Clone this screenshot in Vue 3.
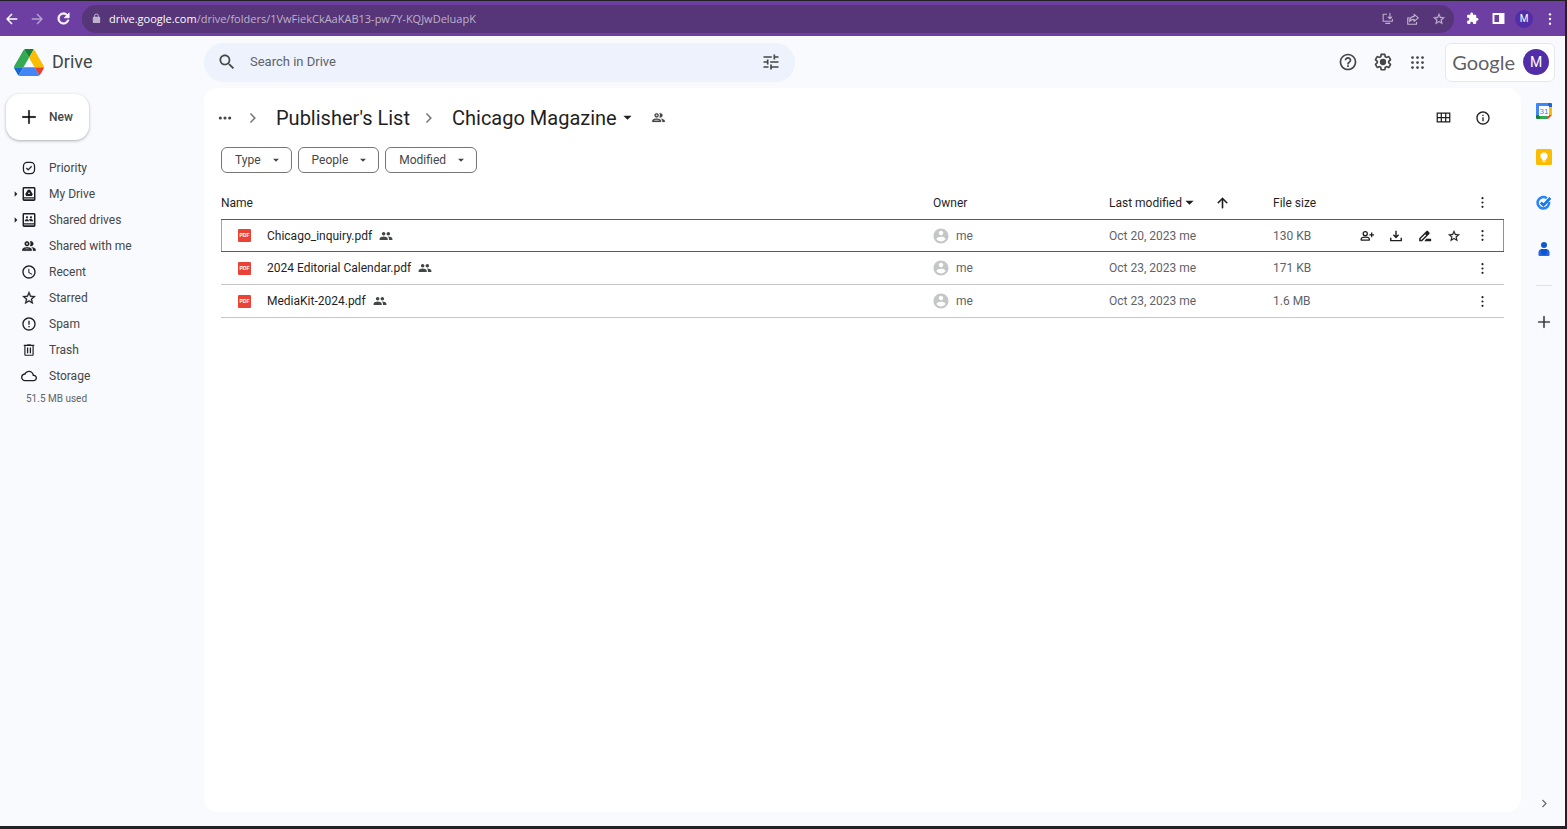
<script setup>
import { ref, h } from 'vue'

const ring = '<path d="M12 2C6.480 2 2 6.480 2 12s4.480 10 10 10 10-4.480 10-10S17.520 2 12 2zm0 18c-4.410 0-8-3.590-8-8s3.590-8 8-8 8 3.590 8 8-3.590 8-8 8z"/>'
const stroke = (body, w = 2) => `<g fill="none" stroke="currentColor" stroke-width="${w}" stroke-linejoin="round" stroke-linecap="butt">${body}</g>`

const icons = {
  back: stroke('<path d="M21 12H5M12 3.500L3.500 12l8.500 8.500"/>', 2.6),
  forward: stroke('<path d="M3 12h16M12 3.500l8.500 8.500-8.500 8.500"/>', 2.4),
  reload: '<path d="M17.650 6.350C16.200 4.900 14.210 4 12 4c-4.420 0-7.990 3.580-7.990 8s3.570 8 7.990 8c3.730 0 6.840-2.550 7.730-6h-2.080c-.820 2.330-3.040 4-5.650 4-3.310 0-6-2.690-6-6s2.690-6 6-6c1.660 0 3.140.690 4.220 1.780L13 11h7V4l-2.350 2.350z" stroke="currentColor" stroke-width="1"/>',
  lock: '<path d="M18 8h-1V6c0-2.760-2.240-5-5-5S7 3.240 7 6v2H6c-1.100 0-2 .9-2 2v10c0 1.100.9 2 2 2h12c1.100 0 2-.9 2-2V10c0-1.100-.9-2-2-2zM9 6c0-1.660 1.340-3 3-3s3 1.340 3 3v2H9V6z"/>',
  install: stroke('<path d="M11 4H4v13h17v-4M8 21h9M16.500 2v10M12.500 8.500l4 4 4-4"/>'),
  send: stroke('<path d="M6 10H3v11h15v-4M14 4l7 6-7 6v-3.500c-4 0-6 1-8 3.500.5-5 3-8 8-8.500z"/>'),
  star: '<path d="M22 9.240l-7.190-.620L12 2 9.190 8.630 2 9.240l5.460 4.730L5.820 21 12 17.270 18.180 21l-1.630-7.030L22 9.240zM12 15.400l-3.760 2.270 1-4.280-3.320-2.880 4.380-.380L12 6.100l1.710 4.040 4.380.380-3.320 2.880 1 4.280L12 15.400z" stroke="currentColor" stroke-width=".4"/>',
  puzzle: '<path d="M20.500 11H19V7c0-1.100-.9-2-2-2h-4V3.500C13 2.120 11.880 1 10.500 1S8 2.120 8 3.500V5H4c-1.100 0-1.990.9-1.990 2v3.800H3.500c1.490 0 2.700 1.210 2.700 2.700s-1.210 2.700-2.700 2.700H2V20c0 1.100.9 2 2 2h3.800v-1.500c0-1.490 1.210-2.700 2.700-2.700s2.700 1.210 2.700 2.700V22H17c1.100 0 2-.9 2-2v-4h1.500c1.380 0 2.500-1.120 2.500-2.500S21.880 11 20.500 11z"/>',
  panel: '<path fill-rule="evenodd" d="M1 2h22v20H1zM4.500 5.500v13H13v-13z"/>',
  dotsV: '<circle cx="12" cy="4" r="2"/><circle cx="12" cy="12" r="2"/><circle cx="12" cy="20" r="2"/>',
  dotsH: '<circle cx="4" cy="12" r="2.700"/><circle cx="12" cy="12" r="2.700"/><circle cx="20" cy="12" r="2.700"/>',
  search: '<path d="M15.500 14h-.790l-.280-.270C15.410 12.590 16 11.110 16 9.500 16 5.910 13.090 3 9.500 3S3 5.910 3 9.500 5.910 16 9.500 16c1.610 0 3.090-.590 4.230-1.570l.270.280v.790l5 4.990L20.490 19l-4.990-5zm-6 0C7.010 14 5 11.990 5 9.500S7.010 5 9.500 5 14 7.010 14 9.500 11.990 14 9.500 14z"/>',
  tune: '<path d="M3 17v2h6v-2H3zM3 5v2h10V5H3zm10 16v-2h8v-2h-8v-2h-2v6h2zM7 9v2H3v2h4v2h2V9H7zm14 4v-2H11v2h10zm-6-4h2V7h4V5h-4V3h-2v6z"/>',
  help: ring + '<path d="M11 16h2v2h-2zM12 6c-2.210 0-4 1.790-4 4h2c0-1.100.9-2 2-2s2 .9 2 2c0 2-3 1.750-3 5h2c0-2.250 3-2.500 3-5 0-2.210-1.790-4-4-4z"/>',
  gear: '<path d="M13.850 22.250h-3.700c-.740 0-1.360-.540-1.450-1.270l-.270-1.890c-.270-.140-.530-.290-.790-.460l-1.800.720c-.7.260-1.470-.030-1.810-.650L2.200 15.530c-.350-.660-.2-1.440.360-1.880l1.530-1.190c-.010-.150-.020-.3-.020-.460 0-.150.010-.310.020-.460l-1.520-1.190c-.590-.450-.740-1.260-.370-1.880l1.850-3.190c.340-.620 1.110-.9 1.790-.630l1.810.730c.260-.170.520-.320.780-.460l.270-1.910c.090-.7.710-1.250 1.440-1.250h3.700c.740 0 1.360.540 1.450 1.270l.270 1.890c.270.140.530.290.790.460l1.800-.720c.710-.260 1.480.030 1.820.650l1.840 3.180c.360.660.2 1.440-.360 1.880l-1.520 1.190c.010.150.020.3.020.460s-.010.310-.020.460l1.520 1.190c.560.450.720 1.230.370 1.860l-1.860 3.220c-.340.620-1.110.9-1.800.630l-1.800-.720c-.260.170-.520.320-.780.460l-.270 1.910c-.1.680-.720 1.220-1.460 1.220zm-3.230-2h2.760l.370-2.550.530-.220c.440-.180.880-.440 1.340-.780l.450-.340 2.380.960 1.380-2.400-2.030-1.580.070-.560c.030-.260.060-.510.060-.780s-.030-.530-.060-.780l-.070-.560 2.030-1.580-1.390-2.400-2.390.960-.450-.350c-.420-.320-.870-.580-1.330-.770l-.520-.220-.370-2.550h-2.760l-.370 2.550-.530.210c-.440.190-.880.440-1.340.790l-.450.330-2.380-.950-1.390 2.390 2.030 1.580-.070.560a7 7 0 0 0-.060.790c0 .260.020.530.060.780l.070.560-2.030 1.580 1.380 2.400 2.390-.960.450.350c.430.330.860.580 1.330.770l.530.220z"/><circle cx="12" cy="12" r="3.800"/>',
  apps: [4, 12, 20].flatMap(y => [4, 12, 20].map(x => `<circle cx="${x}" cy="${y}" r="2.200"/>`)).join(''),
  plus: '<path d="M11 2h2v9h9v2h-9v9h-2v-9H2v-2h9z" stroke="currentColor" stroke-width=".4"/>',
  priority: stroke('<rect x="2.500" y="2.500" width="19" height="19" rx="6.500"/><path d="M7.500 12l3.200 3.200 5.800-6.200"/>', 2.2),
  drive: '<path fill-rule="evenodd" d="M4.500 1.500h15a2.200 2.200 0 0 1 2.200 2.200v16.600a2.200 2.200 0 0 1-2.200 2.200h-15a2.200 2.200 0 0 1-2.200-2.200V3.700a2.200 2.200 0 0 1 2.200-2.200zM4.500 3.700v13h15v-13zM4.500 18.700v1.300h15v-1.300z"/><path fill-rule="evenodd" d="M10.300 5.500h3.400l4 6.700-1.500 2.800H7.800l-1.500-2.800zM12 9l-1.500 3h3z"/>',
  shared: '<path fill-rule="evenodd" d="M4.500 1.500h15a2.200 2.200 0 0 1 2.200 2.200v16.600a2.200 2.200 0 0 1-2.200 2.200h-15a2.200 2.200 0 0 1-2.200-2.200V3.700a2.200 2.200 0 0 1 2.200-2.200zM4.500 3.700v13h15v-13zM4.500 18.700v1.300h15v-1.300z"/><circle cx="9" cy="8" r="1.700"/><circle cx="15" cy="8" r="1.700"/><path d="M5.500 14c0-2.500 1.500-3.300 3.300-3.300s3.200.8 3.200 3.300zM13 14c0-1.500-.3-2.300-.9-3 .8-.5 5.900-1 6.400 3z"/>',
  people: '<path d="M9 13.750c-2.340 0-7 1.170-7 3.500V19h14v-1.750c0-2.330-4.660-3.500-7-3.500zM4.340 17c.840-.580 2.870-1.250 4.660-1.250s3.820.670 4.660 1.250H4.340zM9 12c1.930 0 3.500-1.570 3.500-3.500S10.930 5 9 5 5.500 6.570 5.500 8.500 7.070 12 9 12zm0-5c.830 0 1.500.670 1.500 1.500S9.830 10 9 10s-1.500-.670-1.500-1.500S8.170 7 9 7zm7.040 6.810c1.160.840 1.960 1.960 1.960 3.440V19h4v-1.750c0-2.020-3.500-3.170-5.960-3.440zM15 12c1.930 0 3.500-1.570 3.500-3.500S16.930 5 15 5c-.540 0-1.040.130-1.500.350.630.890 1 1.980 1 3.150s-.370 2.260-1 3.150c.460.220.960.350 1.500.350z" stroke="currentColor" stroke-width=".4"/>',
  clock: ring + '<path d="M12.500 7H11v6l5.250 3.150.750-1.230-4.500-2.670z"/>',
  spam: ring + '<path d="M11 15h2v2h-2zM11 7h2v6h-2z"/>',
  trash: '<path fill-rule="evenodd" d="M15 3V2H9v1H3v2h1v15c0 1.100.9 2 2 2h12c1.100 0 2-.9 2-2V5h1V3h-6zm3 17H6V5h12v15zM8.500 7.500h2.200v10H8.500zM13.300 7.500h2.200v10h-2.200z"/>',
  cloud: '<path d="M19.350 10.040C18.670 6.590 15.640 4 12 4 9.110 4 6.600 5.640 5.350 8.040 2.340 8.360 0 10.910 0 14c0 3.310 2.690 6 6 6h13c2.760 0 5-2.240 5-5 0-2.640-2.050-4.780-4.650-4.960zM19 18H6c-2.210 0-4-1.790-4-4s1.790-4 4-4h.710C7.370 7.690 9.480 6 12 6c3.040 0 5.500 2.460 5.500 5.500v.5H19c1.660 0 3 1.340 3 3s-1.340 3-3 3z"/>',
  group: '<path d="M16 11c1.660 0 2.990-1.340 2.990-3S17.660 5 16 5s-3 1.340-3 3 1.340 3 3 3zm-8 0c1.660 0 2.990-1.340 2.990-3S9.660 5 8 5 5 6.340 5 8s1.340 3 3 3zm0 2c-2.330 0-7 1.170-7 3.500V19h14v-2.500c0-2.330-4.670-3.500-7-3.500zm8 0c-.290 0-.620.020-.970.050 1.160.840 1.970 1.970 1.970 3.450V19h6v-2.500c0-2.330-4.670-3.500-7-3.500z"/>',
  chevron: '<path d="M8.500 3.500L6.700 5.300l6.700 6.700-6.700 6.700 1.800 1.800L17 12z"/>',
  caret: '<path d="M3 8l9 9 9-9z"/>',
  caretRight: '<path d="M8 4l8 8-8 8z"/>',
  grid: '<path fill-rule="evenodd" d="M1 4h22v16H1zM3 6v5h4.500V6zM9.500 6v5h5V6zM16.500 6v5H21V6zM3 13v5h4.500v-5zM9.500 13v5h5v-5zM16.500 13v5H21v-5z"/>',
  info: ring + '<path d="M11 7h2v2h-2zM11 11h2v6h-2z"/>',
  up: '<path d="M4 12l1.410 1.410L11 7.830V21h2V7.830l5.580 5.590L20 12l-8-8z" stroke="currentColor" stroke-width=".5"/>',
  account: '<path d="M12 2C6.480 2 2 6.480 2 12s4.480 10 10 10 10-4.480 10-10S17.520 2 12 2zm0 3c1.660 0 3 1.340 3 3s-1.340 3-3 3-3-1.340-3-3 1.340-3 3-3zm0 14.200c-2.500 0-4.710-1.280-6-3.220.030-1.990 4-3.080 6-3.080 1.990 0 5.970 1.090 6 3.080-1.290 1.940-3.500 3.220-6 3.220z"/>',
  addPerson: stroke('<circle cx="9" cy="8" r="3.500"/><path d="M2 19v-1.500c0-2.500 4-3.500 7-3.500s7 1 7 3.500V19zM20 6v8M16 10h8"/>', 2.2),
  download: stroke('<path d="M12 3v11M7.500 10l4.500 4.500 4.500-4.500M3 15v5h18v-5"/>', 2.4),
  rename: '<path fill-rule="evenodd" d="M2 21v-5L14.500 3.500c.8-.8 1.800-.8 2.600 0l2.400 2.400c.8.8.8 1.800 0 2.600L7 21zM4.500 18.500h1.600L14 10.600 12.400 9 4.500 16.900z"/><path d="M14 16.500h8.500V21H11z"/>',
}

const Icon = props => h('svg', { class: 'icon', viewBox: '0 0 24 24', 'aria-hidden': 'true', innerHTML: icons[props.name] })
Icon.props = ['name']

const nav = [
  { label: 'Priority', icon: 'priority' },
  { label: 'My Drive', icon: 'drive', expandable: true },
  { label: 'Shared drives', icon: 'shared', expandable: true },
  { label: 'Shared with me', icon: 'people' },
  { label: 'Recent', icon: 'clock' },
  { label: 'Starred', icon: 'star' },
  { label: 'Spam', icon: 'spam' },
  { label: 'Trash', icon: 'trash' },
  { label: 'Storage', icon: 'cloud' },
]
const filters = ['Type', 'People', 'Modified']
const files = [
  { name: 'Chicago_inquiry.pdf', modified: 'Oct 20, 2023', size: '130 KB' },
  { name: '2024 Editorial Calendar.pdf', modified: 'Oct 23, 2023', size: '171 KB' },
  { name: 'MediaKit-2024.pdf', modified: 'Oct 23, 2023', size: '1.6 MB' },
]
const rowActions = [
  { label: 'Share', icon: 'addPerson' },
  { label: 'Download', icon: 'download' },
  { label: 'Rename', icon: 'rename' },
  { label: 'Add to Starred', icon: 'star' },
]
const selected = ref(0)
const query = ref('')
</script>

<template>
  <div class="window">
    <div class="browser">
      <button aria-label="Back"><Icon name="back" class="s14" /></button>
      <button class="dim" aria-label="Forward"><Icon name="forward" class="s14" /></button>
      <button aria-label="Reload"><Icon name="reload" class="s17" /></button>
      <div class="omnibox">
        <Icon name="lock" class="s11" />
        <div class="url" role="textbox" contenteditable="true" spellcheck="false" aria-label="Address"><b>drive.google.com</b>/drive/folders/1VwFiekCkAaKAB13-pw7Y-KQJwDeluapK</div>
        <button aria-label="Install"><Icon name="install" class="s13" /></button>
        <button aria-label="Share page"><Icon name="send" class="s14" /></button>
        <button aria-label="Bookmark"><Icon name="star" class="s14" /></button>
      </div>
      <div class="extensions">
        <button aria-label="Extensions"><Icon name="puzzle" class="s13" /></button>
        <button aria-label="Side panel"><Icon name="panel" class="s13" /></button>
        <button class="profile" aria-label="Profile">M</button>
        <button aria-label="Browser menu"><Icon name="dotsV" class="s14" /></button>
      </div>
    </div>

    <header class="header">
      <a href="#" class="brand">
        <svg class="logo" viewBox="0 0 87.300 78" aria-hidden="true">
          <path d="m6.600 66.850 3.850 6.650c.8 1.400 1.950 2.500 3.300 3.300L27.500 53H0c0 1.550.4 3.100 1.200 4.500z" fill="#1967d2" />
          <path d="M43.650 25 29.900 1.200c-1.350.8-2.500 1.900-3.300 3.300L1.200 48.500C.4 49.900 0 51.450 0 53h27.500z" fill="#34a853" />
          <path d="M73.550 76.800c1.350-.8 2.500-1.900 3.300-3.300l1.600-2.750L86.100 57.500c.8-1.400 1.200-2.950 1.200-4.500H59.800l5.850 11.500z" fill="#ea4335" />
          <path d="M43.650 25 57.400 1.200C56.050.4 54.500 0 52.900 0H34.400c-1.600 0-3.150.45-4.500 1.200z" fill="#188038" />
          <path d="M59.800 53H27.500L13.750 76.800c1.350.8 2.900 1.200 4.500 1.200h50.800c1.600 0 3.150-.45 4.500-1.200z" fill="#4285f4" />
          <path d="M73.400 26.500 60.700 4.500c-.8-1.400-1.950-2.500-3.300-3.300L43.650 25 59.800 53h27.450c0-1.550-.4-3.100-1.200-4.500z" fill="#fbbc04" />
        </svg>
        Drive
      </a>
      <form class="search" role="search" @submit.prevent>
        <button aria-label="Search"><Icon name="search" class="s20" /></button>
        <input v-model="query" type="text" placeholder="Search in Drive" aria-label="Search in Drive" />
        <button type="button" aria-label="Search options"><Icon name="tune" class="s20" /></button>
      </form>
      <div class="tools">
        <button aria-label="Help"><Icon name="help" class="s20" /></button>
        <button aria-label="Settings"><Icon name="gear" class="s20" /></button>
        <button aria-label="Google apps"><Icon name="apps" class="s15" /></button>
      </div>
      <button class="account"><span>Google</span><span class="avatar">M</span></button>
    </header>

    <div class="body">
      <aside class="sidebar">
        <button class="new"><Icon name="plus" class="s16" />New</button>
        <nav class="nav">
          <a v-for="item in nav" :key="item.label" href="#">
            <span class="twist"><Icon v-if="item.expandable" name="caretRight" class="s8" /></span>
            <span class="slot"><Icon :name="item.icon" :class="['priority', 'trash'].includes(item.icon) ? 's14' : 's16'" /></span>
            {{ item.label }}
          </a>
        </nav>
        <p class="quota">51.5 MB used</p>
      </aside>

      <main class="panel">
        <div class="crumbs">
          <button class="small" aria-label="Show path"><Icon name="dotsH" class="s14" /></button>
          <Icon name="chevron" class="s14 grey" />
          <a href="#" class="crumb">Publisher's List</a>
          <Icon name="chevron" class="s14 grey" />
          <button class="crumb current">Chicago Magazine<Icon name="caret" class="s11" /></button>
          <button class="small" aria-label="Manage access"><Icon name="people" class="s15" /></button>
          <div class="views">
            <button aria-label="Grid view"><Icon name="grid" class="s15" /></button>
            <button aria-label="Details"><Icon name="info" class="s16" /></button>
          </div>
        </div>
        <div class="filters">
          <button v-for="f in filters" :key="f">{{ f }}<Icon name="caret" class="s8" /></button>
        </div>

        <table class="files">
          <colgroup>
            <col />
            <col class="c-owner" />
            <col class="c-modified" />
            <col class="c-size" />
            <col class="c-actions" />
          </colgroup>
          <thead>
            <tr>
              <th scope="col">Name</th>
              <th scope="col">Owner</th>
              <th scope="col">
                <div class="sort">
                  <button>Last modified<Icon name="caret" class="s11" /></button>
                  <button aria-label="Reverse sort direction"><Icon name="up" class="s15" /></button>
                </div>
              </th>
              <th scope="col">File size</th>
              <th scope="col">
                <div class="actions"><button aria-label="More options"><Icon name="dotsV" class="s13" /></button></div>
              </th>
            </tr>
          </thead>
          <tbody>
            <tr v-for="(file, i) in files" :key="file.name" :class="{ selected: i === selected }" @click="selected = i">
              <td>
                <div class="name">
                  <span class="pdf">PDF</span>
                  <span>{{ file.name }}</span>
                  <Icon name="group" class="s14" />
                </div>
              </td>
              <td><div class="owner"><Icon name="account" class="s18" />me</div></td>
              <td>{{ file.modified }} me</td>
              <td>{{ file.size }}</td>
              <td>
                <div class="actions">
                  <template v-if="i === selected">
                    <button v-for="a in rowActions" :key="a.label" :aria-label="a.label"><Icon :name="a.icon" class="s14" /></button>
                  </template>
                  <button aria-label="More actions"><Icon name="dotsV" class="s13" /></button>
                </div>
              </td>
            </tr>
          </tbody>
        </table>
      </main>

      <aside class="rail">
        <button aria-label="Calendar">
          <svg class="s16" viewBox="0 0 16 16">
            <path d="M1 0h11v4H4v8H0V1a1 1 0 0 1 1-1z" fill="#4285f4" />
            <path d="M12 0h3a1 1 0 0 1 1 1v3h-4z" fill="#1967d2" />
            <path d="M12 4h4v8h-4z" fill="#fbbc04" />
            <path d="M4 12h8v4H4z" fill="#34a853" />
            <path d="M0 12h4v4H1a1 1 0 0 1-1-1z" fill="#188038" />
            <path d="M12 12h4l-4 4z" fill="#ea4335" />
            <path d="M3 3h10v10H3z" fill="#fff" />
            <text x="8" y="11" text-anchor="middle" font-size="8" fill="#4285f4">31</text>
          </svg>
        </button>
        <button aria-label="Keep">
          <svg class="s16" viewBox="0 0 16 16">
            <rect width="16" height="16" rx="1.500" fill="#fbbc04" />
            <circle cx="8" cy="7" r="3.600" fill="#fff" />
            <path d="M6.200 9h3.600v2H6.200zM6.200 11.500h3.600v1.300H6.200z" fill="#fff" />
          </svg>
        </button>
        <button aria-label="Tasks">
          <svg class="s16" viewBox="0 0 16 16" fill="none">
            <path d="M10.800 3.200A5.700 5.700 0 1 0 13 7" stroke="#2684fc" stroke-width="2.600" />
            <path d="M4.800 7.500l2.700 2.700 6.800-7.200" stroke="#1a73e8" stroke-width="2.600" />
          </svg>
        </button>
        <button aria-label="Contacts">
          <svg class="s16" viewBox="0 0 16 16">
            <circle cx="8" cy="4" r="3" fill="#0b57d0" />
            <path d="M2.500 14v-2.500A3.500 3.500 0 0 1 6 8h4a3.500 3.500 0 0 1 3.500 3.500V14a1 1 0 0 1-1 1h-9a1 1 0 0 1-1-1z" fill="#2a66e0" />
            <path d="M5 8h6v3a3 3 0 0 1-6 0z" fill="#0b57d0" />
          </svg>
        </button>
        <hr />
        <button aria-label="Get add-ons"><Icon name="plus" class="s14" /></button>
        <button class="collapse" aria-label="Hide side panel"><Icon name="chevron" class="s11" /></button>
      </aside>
    </div>
  </div>
</template>

<style>
body {
  background: #f8fafd;
}
</style>

<style scoped>
.window {
  box-sizing: border-box;
  min-height: 100vh;
  display: flex;
  flex-direction: column;
  border: solid #222226;
  border-width: 1px 2px 3px 0;
  background: #f8fafd;
  color: #1f1f1f;
  font: 12px/16px Roboto, "Liberation Sans", sans-serif;
}
button {
  display: flex;
  align-items: center;
  justify-content: center;
  flex: none;
  padding: 0;
  border: 0;
  background: none;
  color: inherit;
  font: inherit;
  cursor: pointer;
}
a {
  color: inherit;
  text-decoration: none;
}
.icon {
  display: block;
  flex: none;
  fill: currentColor;
}
.s8 { width: 8px; height: 8px; }
.s11 { width: 11px; height: 11px; }
.s13 { width: 13px; height: 13px; }
.s14 { width: 14px; height: 14px; }
.s15 { width: 15px; height: 15px; }
.s16 { width: 16px; height: 16px; }
.s17 { width: 17px; height: 17px; }
.s18 { width: 18px; height: 18px; }
.s20 { width: 20px; height: 20px; }

.browser {
  display: flex;
  align-items: center;
  height: 35px;
  padding-right: 2px;
  background: #6e3fa3;
  color: #fff;
}
.browser > button {
  width: 26px;
  height: 26px;
}
.browser > button:first-child {
  width: 24px;
}
.dim {
  opacity: .5;
}
.omnibox {
  flex: 1;
  display: flex;
  align-items: center;
  height: 28px;
  margin-left: 6px;
  padding: 0 2px 0 9px;
  border-radius: 14px;
  background: #563578;
  color: #bfb3cc;
}
.omnibox button {
  width: 26px;
  height: 26px;
}
.url {
  flex: 1;
  margin-left: 7px;
  font: 11px/16px "Open Sans", "Noto Sans", sans-serif;
  outline: 0;
}
.url b {
  color: #fff;
  font-weight: 400;
}
.extensions {
  display: flex;
  align-items: center;
  margin-left: 5px;
}
.extensions button {
  width: 26px;
  height: 26px;
}
.extensions .profile {
  width: 18px;
  height: 18px;
  margin: 0 4px;
  border-radius: 50%;
  background: #512da8;
  font-size: 10px;
}

.header {
  display: flex;
  align-items: center;
  height: 52px;
}
.brand {
  box-sizing: border-box;
  display: flex;
  align-items: center;
  gap: 8px;
  width: 204px;
  padding-left: 14px;
  color: #444746;
  font-size: 18px;
  line-height: 24px;
}
.logo {
  width: 30px;
  height: 27px;
}
.search {
  flex: 0 1 591px;
  box-sizing: border-box;
  display: flex;
  align-items: center;
  gap: 13px;
  height: 39px;
  padding: 0 14px 0 13px;
  border-radius: 20px;
  background: #edf2fc;
  color: #444746;
}
.search input {
  flex: 1;
  min-width: 0;
  padding: 0;
  border: 0;
  outline: 0;
  background: none;
  color: #1f1f1f;
  font: 13px/20px Roboto, "Liberation Sans", sans-serif;
}
.search input::placeholder {
  color: #5f6368;
  opacity: 1;
}
.tools {
  display: flex;
  margin-left: auto;
  color: #444746;
}
.tools button {
  width: 35px;
  height: 35px;
}
.account {
  gap: 8px;
  box-sizing: border-box;
  height: 39px;
  margin: 0 10px 0 10px;
  padding: 0 5px 0 6px;
  border: 1px solid #e6e8ee;
  border-radius: 6px;
  background: #fff;
  color: #5f6368;
  font: 20px/24px Lato, "Liberation Sans", sans-serif;
}
.avatar {
  width: 26px;
  border-radius: 50%;
  background: #512da8;
  color: #fff;
  font: 14px/26px Roboto, "Liberation Sans", sans-serif;
  text-align: center;
}

.body {
  flex: 1;
  display: flex;
}
.sidebar {
  flex: none;
  width: 204px;
}
.new {
  gap: 12px;
  height: 46px;
  margin: 6px 0 0 6px;
  padding: 0 16px 0 15px;
  border-radius: 14px;
  background: #fff;
  box-shadow: 0 1px 3px rgba(60, 64, 67, .4);
  font-weight: 500;
  color: #444746;
}
.new .icon {
  color: #000;
}
.nav {
  margin-top: 15px;
}
.nav a {
  display: flex;
  align-items: center;
  height: 26px;
  padding-left: 12px;
  color: #444746;
}
.nav .icon {
  color: #1f1f1f;
}
.twist {
  width: 8px;
}
.slot {
  display: flex;
  justify-content: center;
  width: 18px;
  margin-right: 11px;
}
.quota {
  margin: 2px 0 0 26px;
  color: #5f6368;
  font-size: 10px;
}

.panel {
  flex: 1;
  min-width: 0;
  margin-bottom: 14px;
  padding: 0 17px;
  border-radius: 14px;
  background: #fff;
}
.crumbs {
  display: flex;
  align-items: center;
  height: 59px;
}
.crumb {
  margin: 0 12px 0 16px;
  font-size: 20px;
  line-height: 28px;
}
.current {
  gap: 5px;
  margin-right: 18px;
}
.small {
  color: #444746;
}
.crumbs .small:first-child {
  margin: 0 14px 0 -3px;
}
.grey {
  color: #70757a;
}
.views {
  display: flex;
  gap: 12px;
  margin: 0 7px 0 auto;
}
.views button {
  width: 28px;
  height: 28px;
}
.filters {
  display: flex;
  gap: 6px;
}
.filters button {
  gap: 11px;
  box-sizing: border-box;
  height: 26px;
  padding: 0 11px 0 13px;
  border: 1px solid #747775;
  border-radius: 6px;
  color: #444746;
}

.files {
  width: 100%;
  margin-top: 13px;
  border-spacing: 0;
  table-layout: fixed;
}
.c-owner { width: 176px; }
.c-modified { width: 164px; }
.c-size { width: 80px; }
.c-actions { width: 151px; }
.files th,
.files td {
  box-sizing: border-box;
  height: 33px;
  padding: 0;
  text-align: left;
  white-space: nowrap;
}
.files th {
  color: #1f1f1f;
  font-weight: 400;
}
.files td {
  border-bottom: 1px solid #c7c7c7;
  color: #5f6368;
}
.files .selected td {
  border-top: 1px solid #2a5fc4;
  border-bottom-color: #2a5fc4;
}
.files .selected td:first-child {
  box-shadow: inset 1px 0 #8aa9e4;
}
.files .selected td:last-child {
  box-shadow: inset -1px 0 #6b93e0;
}
.sort {
  display: flex;
  gap: 20px;
}
.sort button {
  gap: 2px;
}
.name {
  display: flex;
  align-items: center;
  gap: 7px;
  padding-left: 17px;
  color: #1f1f1f;
}
.name .icon {
  color: #444746;
}
.pdf {
  width: 13px;
  margin-right: 9px;
  border-radius: 1px;
  background: #ea4335;
  color: #fff;
  font: bold 5px/13px "Liberation Sans", sans-serif;
  text-align: center;
}
.owner {
  display: flex;
  align-items: center;
  gap: 6px;
  margin-left: -1px;
}
.owner .icon {
  color: #c4c7c5;
}
.actions {
  display: flex;
  justify-content: flex-end;
  padding-right: 7px;
  color: #1f1f1f;
}
.actions button {
  width: 29px;
  height: 24px;
}

.rail {
  box-sizing: border-box;
  display: flex;
  flex-direction: column;
  align-items: center;
  flex: none;
  width: 44px;
  padding-left: 2px;
}
.rail button {
  width: 32px;
  height: 46px;
}
.rail hr {
  width: 16px;
  height: 1px;
  margin: 13px 0;
  border: 0;
  background: #dfe2e8;
}
.rail .collapse {
  margin-top: auto;
  color: #5f6368;
}
text {
  font-family: "Liberation Sans", sans-serif;
}
</style>
